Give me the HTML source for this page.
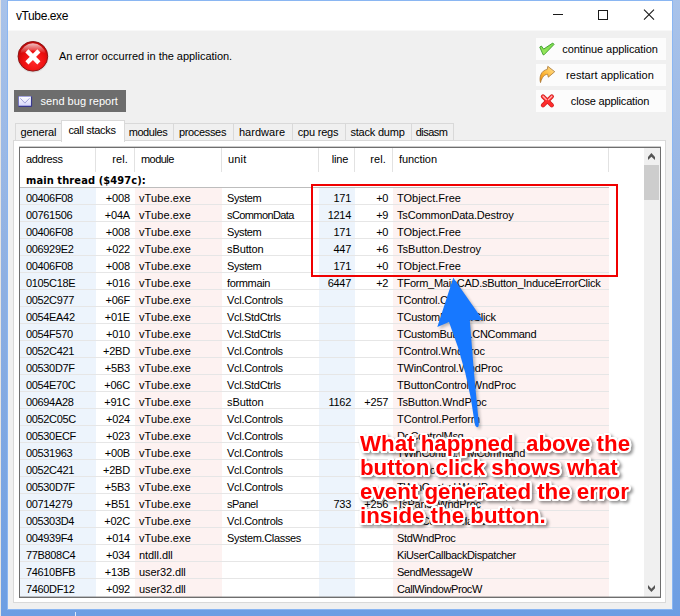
<!DOCTYPE html><html><head><meta charset="utf-8"><title>vTube.exe</title><style>
html,body{margin:0;padding:0}
body{width:680px;height:616px;position:relative;overflow:hidden;background:#6f9fe0;font-family:"Liberation Sans", sans-serif;font-size:11px;color:#000}
.abs{position:absolute}
#frame{left:0;top:0;width:680px;height:616px;background:linear-gradient(180deg,#a9c3ea 0%,#8fb0e2 45%,#6d9ee3 100%)}
#ledge{left:0;top:0;width:1px;height:616px;background:#e6e4e2}
#client{left:8px;top:1px;width:664px;height:608px;background:#f0f0f0;box-shadow:0 0 0 1px #8ab6f2}
#title{left:0;top:0;width:664px;height:29px;background:#fff;border-bottom:1px solid #f8f8f8}
#title .t{left:8px;top:7px;font-size:12px;line-height:16px;letter-spacing:-0.4px}
.btn{left:528px;width:130px;height:22px;background:#fcfcfc}
.btn .l{position:absolute;left:18px;right:0;top:-0.5px;line-height:22px;text-align:center;white-space:nowrap}
#send{left:6px;top:89px;width:112px;height:22px;background:#6d6d6d;color:#fff}
#send .l{position:absolute;left:26.6px;top:0;line-height:22px;white-space:nowrap}
.tab{top:122px;height:18px;border:1px solid #d9d9d9;border-bottom:none;box-sizing:border-box;background:#f0f0f0;text-align:center;line-height:17px;white-space:nowrap}
.tab.sel{top:119px;height:22px;background:#fff;z-index:3;line-height:17px;padding-top:1px}
.tab.sh{padding-right:2px}
#pane{left:5px;top:139px;width:653px;height:463px;background:#fff;border:1px solid #d9d9d9;box-sizing:border-box}
#list{left:11px;top:146px;width:642px;height:451px;background:#fff;border:1px solid #6e6e6e;box-sizing:border-box;overflow:hidden;box-shadow:0 -1px 0 rgba(110,110,110,0.35)}
.hd{top:5.4px;line-height:13px;white-space:nowrap}
.hs{top:0px;width:1px;height:24px;background:#e2e2e2}
.col{top:40px;height:409px}
.row{left:0;width:589px;height:17px;border-top:1px solid #e6e6e6;box-sizing:border-box}
.row span{position:absolute;top:2.6px;line-height:14px;white-space:nowrap}
.r{text-align:right}
</style></head><body>
<div id="frame" class="abs"></div><div id="ledge" class="abs"></div>
<div id="client" class="abs">
<div id="title" class="abs"><div class="t abs">vTube.exe</div>
<svg class="abs" style="left:530px;top:0" width="134" height="29" viewBox="0 0 134 29"><g stroke="#1a1a1a" stroke-width="1" fill="none" shape-rendering="crispEdges"><path d="M15 13.5h10"/><rect x="60.5" y="9.5" width="9" height="9"/></g><path d="M106 8.700l10 10M116 8.700l-10 10" stroke="#1a1a1a" stroke-width="1.1" fill="none"/></svg>
</div>
<svg class="abs" style="left:8px;top:38px" width="34" height="36" viewBox="0 0 34 36"><defs><radialGradient id="rg" cx="0.55" cy="0.68" r="0.62"><stop offset="0" stop-color="#ff2a2a"/><stop offset="0.6" stop-color="#ee1010"/><stop offset="1" stop-color="#c40808"/></radialGradient><linearGradient id="hl" x1="0" y1="0" x2="0" y2="1"><stop offset="0" stop-color="#fff" stop-opacity="0.75"/><stop offset="1" stop-color="#fff" stop-opacity="0"/></linearGradient></defs><circle cx="17" cy="17.9" r="15.6" fill="#b0b0b0" opacity="0.35"/><circle cx="16.9" cy="17.300" r="14.8" fill="url(#rg)" stroke="#8e1515" stroke-width="1"/><path d="M4.2 14.5A13 13 0 0 1 29.6 14.5Q17 8.5 4.2 14.5Z" fill="url(#hl)"/><path d="M10.9 11.9l12 12M22.900 11.9l-12 12" stroke="#fff" stroke-width="4.4" stroke-linecap="butt"/></svg>
<div class="abs" style="left:51px;top:48px;line-height:14px;white-space:nowrap" id="errmsg"><span style="letter-spacing:-0.03px;">An error occurred in the application.</span></div>
<div id="send" class="abs"><svg class="abs" style="left:4px;top:5px" width="15" height="13" viewBox="0 0 15 13"><defs><linearGradient id="env" x1="0" y1="0" x2="0" y2="1"><stop offset="0" stop-color="#ffffff"/><stop offset="1" stop-color="#d6d6fb"/></linearGradient></defs><rect x="0.200" y="1" width="13.400" height="10.400" rx="0.800" fill="#6a6ac8"/><path d="M13.600 1.600V11.400H0.600" fill="none" stroke="#34348c" stroke-width="1"/><rect x="0.900" y="1.600" width="12" height="9" fill="url(#env)"/><path d="M2.300 3.300l4.600 4.800 4.600-4.800" fill="none" stroke="#9a9ad6" stroke-width="0.900"/></svg><span class="l" style="letter-spacing:0.02px;">send bug report</span></div>
<div class="btn abs" style="top:37px"><svg class="abs" style="left:0;top:0" width="22" height="22" viewBox="0 0 22 22"><defs><linearGradient id="gck" x1="0" y1="0" x2="0" y2="1"><stop offset="0" stop-color="#7ddc4c"/><stop offset="1" stop-color="#9be85e"/></linearGradient></defs><path d="M3.75 9.1L5.36 8L7.68 11.07L16.79 5L18.04 6.43L8.04 16.79L7.14 16.79Z" fill="url(#gck)" stroke="#3c9c2c" stroke-width="0.9" stroke-linejoin="round"/></svg><span class="l" style="letter-spacing:-0.09px;">continue application</span></div>
<div class="btn abs" style="top:63px"><svg class="abs" style="left:0;top:0" width="22" height="22" viewBox="0 0 22 22"><defs><linearGradient id="gar" x1="1" y1="0" x2="0" y2="1"><stop offset="0" stop-color="#ffe29a"/><stop offset="0.45" stop-color="#ffc24a"/><stop offset="1" stop-color="#f08c00"/></linearGradient></defs><path d="M11.8 2.3L18.75 7.7L12.3 13.2L11.6 10.2C8.5 10.5 6 13 4.5 18.6C3 13 5 6.5 11.25 5.4Z" fill="url(#gar)" stroke="#a8783a" stroke-width="0.8" stroke-linejoin="round"/></svg><span class="l" style="letter-spacing:0.06px;">restart application</span></div>
<div class="btn abs" style="top:89px"><svg class="abs" style="left:0;top:0" width="22" height="22" viewBox="0 0 22 22"><g fill="none" stroke-linecap="round"><path d="M7 6.500l8.800 8.800M15.800 6.500l-8.800 8.800" stroke="#cc2222" stroke-width="4.300"/><path d="M7 6.500l8.800 8.800M15.800 6.500l-8.800 8.800" stroke="#ff2c2c" stroke-width="2.900"/><path d="M7 6.300l3.300 3.300M15.800 6.300l-3.300 3.300" stroke="#ffb4b4" stroke-width="1.300"/></g></svg><span class="l" style="letter-spacing:-0.18px;">close application</span></div>
<div class="tab abs" style="left:7px;width:47px"><span style="letter-spacing:-0.11px;">general</span></div>
<div class="tab abs sel sh" style="left:53px;width:64px"><span style="letter-spacing:-0.32px;">call stacks</span></div>
<div class="tab abs sh" style="left:116px;width:50px"><span style="letter-spacing:-0.41px;">modules</span></div>
<div class="tab abs sh" style="left:165px;width:61px"><span style="letter-spacing:-0.33px;">processes</span></div>
<div class="tab abs sh" style="left:225px;width:60px"><span style="letter-spacing:0.04px;">hardware</span></div>
<div class="tab abs sh" style="left:284px;width:54px"><span style="letter-spacing:-0.20px;">cpu regs</span></div>
<div class="tab abs sh" style="left:337px;width:67px"><span style="letter-spacing:-0.21px;">stack dump</span></div>
<div class="tab abs sh" style="left:403px;width:43px"><span style="letter-spacing:-0.52px;">disasm</span></div>
<div id="pane" class="abs"></div>
<div id="list" class="abs">
<div class="col abs" style="left:0px;width:76px;background:#edf4fc"></div>
<div class="col abs" style="left:115px;width:87px;background:#fdf2f1"></div>
<div class="col abs" style="left:299px;width:36px;background:#edf4fc"></div>
<div class="col abs" style="left:373px;width:216px;background:#fdf2f1"></div>
<div class="hs abs" style="left:75px"></div>
<div class="hs abs" style="left:114px"></div>
<div class="hs abs" style="left:201px"></div>
<div class="hs abs" style="left:298px"></div>
<div class="hs abs" style="left:334px"></div>
<div class="hs abs" style="left:372px"></div>
<div class="hs abs" style="left:588px"></div>
<div class="hd abs" style="left:6px"><span style="letter-spacing:-0.36px;">address</span></div>
<div class="hd abs r" style="left:76px;width:32px"><span style="letter-spacing:0.09px;">rel.</span></div>
<div class="hd abs" style="left:121px"><span style="letter-spacing:-0.55px;">module</span></div>
<div class="hd abs" style="left:208px"><span style="letter-spacing:0.17px;">unit</span></div>
<div class="hd abs r" style="left:299px;width:29.4px"><span style="letter-spacing:-0.10px;">line</span></div>
<div class="hd abs r" style="left:335px;width:31px"><span style="letter-spacing:0.09px;">rel.</span></div>
<div class="hd abs" style="left:379px"><span style="letter-spacing:-0.07px;">function</span></div>
<div class="abs" style="left:6px;top:26.4px;line-height:13px;letter-spacing:0.1px;font-weight:bold;font-family:'DejaVu Sans Condensed','Liberation Sans',sans-serif;white-space:nowrap" id="mt">main thread ($497c):</div>
<div class="abs" style="left:0;top:39px;width:589px;height:1px;background:#bdbdbd"></div>
<div class="row abs" style="top:39px;border-top-color:transparent">
<span style="letter-spacing:-0.34px;left:6px">00406F08</span>
<span class="r" style="letter-spacing:-0.15px;left:76px;width:34px">+008</span>
<span style="letter-spacing:0.10px;left:119px">vTube.exe</span>
<span style="letter-spacing:-0.40px;left:207px">System</span>
<span class="r" style="letter-spacing:-0.30px;left:299px;width:32px">171</span>
<span class="r" style="letter-spacing:-0.20px;left:335px;width:33.3px">+0</span>
<span style="letter-spacing:0.00px;left:377px">TObject.Free</span>
</div>
<div class="row abs" style="top:56px">
<span style="letter-spacing:-0.34px;left:6px">00761506</span>
<span class="r" style="letter-spacing:-0.20px;left:76px;width:34px">+04A</span>
<span style="letter-spacing:0.10px;left:119px">vTube.exe</span>
<span style="letter-spacing:-0.59px;left:207px">sCommonData</span>
<span class="r" style="letter-spacing:-0.30px;left:299px;width:32px">1214</span>
<span class="r" style="letter-spacing:-0.20px;left:335px;width:33.3px">+9</span>
<span style="letter-spacing:-0.16px;left:377px">TsCommonData.Destroy</span>
</div>
<div class="row abs" style="top:73px">
<span style="letter-spacing:-0.34px;left:6px">00406F08</span>
<span class="r" style="letter-spacing:-0.15px;left:76px;width:34px">+008</span>
<span style="letter-spacing:0.10px;left:119px">vTube.exe</span>
<span style="letter-spacing:-0.40px;left:207px">System</span>
<span class="r" style="letter-spacing:-0.30px;left:299px;width:32px">171</span>
<span class="r" style="letter-spacing:-0.20px;left:335px;width:33.3px">+0</span>
<span style="letter-spacing:0.00px;left:377px">TObject.Free</span>
</div>
<div class="row abs" style="top:90px">
<span style="letter-spacing:-0.34px;left:6px">006929E2</span>
<span class="r" style="letter-spacing:-0.20px;left:76px;width:34px">+022</span>
<span style="letter-spacing:0.10px;left:119px">vTube.exe</span>
<span style="letter-spacing:-0.10px;left:207px">sButton</span>
<span class="r" style="letter-spacing:-0.30px;left:299px;width:32px">447</span>
<span class="r" style="letter-spacing:-0.20px;left:335px;width:33.3px">+6</span>
<span style="letter-spacing:0.02px;left:377px">TsButton.Destroy</span>
</div>
<div class="row abs" style="top:107px">
<span style="letter-spacing:-0.34px;left:6px">00406F08</span>
<span class="r" style="letter-spacing:-0.15px;left:76px;width:34px">+008</span>
<span style="letter-spacing:0.10px;left:119px">vTube.exe</span>
<span style="letter-spacing:-0.40px;left:207px">System</span>
<span class="r" style="letter-spacing:-0.30px;left:299px;width:32px">171</span>
<span class="r" style="letter-spacing:-0.20px;left:335px;width:33.3px">+0</span>
<span style="letter-spacing:0.00px;left:377px">TObject.Free</span>
</div>
<div class="row abs" style="top:124px">
<span style="letter-spacing:-0.34px;left:6px">0105C18E</span>
<span class="r" style="letter-spacing:-0.20px;left:76px;width:34px">+016</span>
<span style="letter-spacing:0.10px;left:119px">vTube.exe</span>
<span style="letter-spacing:-0.35px;left:207px">formmain</span>
<span class="r" style="letter-spacing:-0.30px;left:299px;width:32px">6447</span>
<span class="r" style="letter-spacing:-0.20px;left:335px;width:33.3px">+2</span>
<span style="letter-spacing:-0.26px;left:377px">TForm_MainCAD.sButton_InduceErrorClick</span>
</div>
<div class="row abs" style="top:141px">
<span style="letter-spacing:-0.34px;left:6px">0052C977</span>
<span class="r" style="letter-spacing:-0.20px;left:76px;width:34px">+06F</span>
<span style="letter-spacing:0.10px;left:119px">vTube.exe</span>
<span style="letter-spacing:-0.29px;left:207px">Vcl.Controls</span>
<span style="letter-spacing:-0.25px;left:377px">TControl.Click</span>
</div>
<div class="row abs" style="top:158px">
<span style="letter-spacing:-0.34px;left:6px">0054EA42</span>
<span class="r" style="letter-spacing:-0.20px;left:76px;width:34px">+01E</span>
<span style="letter-spacing:0.10px;left:119px">vTube.exe</span>
<span style="letter-spacing:-0.31px;left:207px">Vcl.StdCtrls</span>
<span style="letter-spacing:-0.24px;left:377px">TCustomButton.Click</span>
</div>
<div class="row abs" style="top:175px">
<span style="letter-spacing:-0.34px;left:6px">0054F570</span>
<span class="r" style="letter-spacing:-0.20px;left:76px;width:34px">+010</span>
<span style="letter-spacing:0.10px;left:119px">vTube.exe</span>
<span style="letter-spacing:-0.31px;left:207px">Vcl.StdCtrls</span>
<span style="letter-spacing:-0.30px;left:377px">TCustomButton.CNCommand</span>
</div>
<div class="row abs" style="top:192px">
<span style="letter-spacing:-0.34px;left:6px">0052C421</span>
<span class="r" style="letter-spacing:-0.20px;left:76px;width:34px">+2BD</span>
<span style="letter-spacing:0.10px;left:119px">vTube.exe</span>
<span style="letter-spacing:-0.29px;left:207px">Vcl.Controls</span>
<span style="letter-spacing:-0.16px;left:377px">TControl.WndProc</span>
</div>
<div class="row abs" style="top:209px">
<span style="letter-spacing:-0.34px;left:6px">00530D7F</span>
<span class="r" style="letter-spacing:-0.20px;left:76px;width:34px">+5B3</span>
<span style="letter-spacing:0.10px;left:119px">vTube.exe</span>
<span style="letter-spacing:-0.29px;left:207px">Vcl.Controls</span>
<span style="letter-spacing:-0.21px;left:377px">TWinControl.WndProc</span>
</div>
<div class="row abs" style="top:226px">
<span style="letter-spacing:-0.34px;left:6px">0054E70C</span>
<span class="r" style="letter-spacing:-0.20px;left:76px;width:34px">+06C</span>
<span style="letter-spacing:0.10px;left:119px">vTube.exe</span>
<span style="letter-spacing:-0.31px;left:207px">Vcl.StdCtrls</span>
<span style="letter-spacing:-0.15px;left:377px">TButtonControl.WndProc</span>
</div>
<div class="row abs" style="top:243px">
<span style="letter-spacing:-0.34px;left:6px">00694A28</span>
<span class="r" style="letter-spacing:-0.20px;left:76px;width:34px">+91C</span>
<span style="letter-spacing:0.10px;left:119px">vTube.exe</span>
<span style="letter-spacing:-0.10px;left:207px">sButton</span>
<span class="r" style="letter-spacing:-0.30px;left:299px;width:32px">1162</span>
<span class="r" style="letter-spacing:-0.20px;left:335px;width:33.3px">+257</span>
<span style="letter-spacing:-0.09px;left:377px">TsButton.WndProc</span>
</div>
<div class="row abs" style="top:260px">
<span style="letter-spacing:-0.34px;left:6px">0052C05C</span>
<span class="r" style="letter-spacing:-0.20px;left:76px;width:34px">+024</span>
<span style="letter-spacing:0.10px;left:119px">vTube.exe</span>
<span style="letter-spacing:-0.29px;left:207px">Vcl.Controls</span>
<span style="letter-spacing:-0.09px;left:377px">TControl.Perform</span>
</div>
<div class="row abs" style="top:277px">
<span style="letter-spacing:-0.34px;left:6px">00530ECF</span>
<span class="r" style="letter-spacing:-0.20px;left:76px;width:34px">+023</span>
<span style="letter-spacing:0.10px;left:119px">vTube.exe</span>
<span style="letter-spacing:-0.29px;left:207px">Vcl.Controls</span>
<span style="letter-spacing:-0.33px;left:377px">DoControlMsg</span>
</div>
<div class="row abs" style="top:294px">
<span style="letter-spacing:-0.34px;left:6px">00531963</span>
<span class="r" style="letter-spacing:-0.20px;left:76px;width:34px">+00B</span>
<span style="letter-spacing:0.10px;left:119px">vTube.exe</span>
<span style="letter-spacing:-0.29px;left:207px">Vcl.Controls</span>
<span style="letter-spacing:-0.31px;left:377px">TWinControl.WMCommand</span>
</div>
<div class="row abs" style="top:311px">
<span style="letter-spacing:-0.34px;left:6px">0052C421</span>
<span class="r" style="letter-spacing:-0.20px;left:76px;width:34px">+2BD</span>
<span style="letter-spacing:0.10px;left:119px">vTube.exe</span>
<span style="letter-spacing:-0.29px;left:207px">Vcl.Controls</span>
<span style="letter-spacing:-0.16px;left:377px">TControl.WndProc</span>
</div>
<div class="row abs" style="top:328px">
<span style="letter-spacing:-0.34px;left:6px">00530D7F</span>
<span class="r" style="letter-spacing:-0.20px;left:76px;width:34px">+5B3</span>
<span style="letter-spacing:0.10px;left:119px">vTube.exe</span>
<span style="letter-spacing:-0.29px;left:207px">Vcl.Controls</span>
<span style="letter-spacing:-0.21px;left:377px">TWinControl.WndProc</span>
</div>
<div class="row abs" style="top:345px">
<span style="letter-spacing:-0.34px;left:6px">00714279</span>
<span class="r" style="letter-spacing:-0.20px;left:76px;width:34px">+B51</span>
<span style="letter-spacing:0.10px;left:119px">vTube.exe</span>
<span style="letter-spacing:-0.50px;left:207px">sPanel</span>
<span class="r" style="letter-spacing:-0.30px;left:299px;width:32px">733</span>
<span class="r" style="letter-spacing:-0.20px;left:335px;width:33.3px">+256</span>
<span style="letter-spacing:-0.24px;left:377px">TsPanel.WndProc</span>
</div>
<div class="row abs" style="top:362px">
<span style="letter-spacing:-0.34px;left:6px">005303D4</span>
<span class="r" style="letter-spacing:-0.20px;left:76px;width:34px">+02C</span>
<span style="letter-spacing:0.10px;left:119px">vTube.exe</span>
<span style="letter-spacing:-0.29px;left:207px">Vcl.Controls</span>
<span style="letter-spacing:-0.25px;left:377px">TWinControl.MainWndProc</span>
</div>
<div class="row abs" style="top:379px">
<span style="letter-spacing:-0.34px;left:6px">004939F4</span>
<span class="r" style="letter-spacing:-0.20px;left:76px;width:34px">+014</span>
<span style="letter-spacing:0.10px;left:119px">vTube.exe</span>
<span style="letter-spacing:-0.35px;left:207px">System.Classes</span>
<span style="letter-spacing:-0.34px;left:377px">StdWndProc</span>
</div>
<div class="row abs" style="top:396px">
<span style="letter-spacing:-0.34px;left:6px">77B808C4</span>
<span class="r" style="letter-spacing:-0.20px;left:76px;width:34px">+034</span>
<span style="letter-spacing:-0.06px;left:119px">ntdll.dll</span>
<span style="letter-spacing:-0.37px;left:377px">KiUserCallbackDispatcher</span>
</div>
<div class="row abs" style="top:413px">
<span style="letter-spacing:-0.34px;left:6px">74610BFB</span>
<span class="r" style="letter-spacing:-0.20px;left:76px;width:34px">+13B</span>
<span style="letter-spacing:-0.11px;left:119px">user32.dll</span>
<span style="letter-spacing:-0.47px;left:377px">SendMessageW</span>
</div>
<div class="row abs" style="top:430px">
<span style="letter-spacing:-0.34px;left:6px">7460DF12</span>
<span class="r" style="letter-spacing:-0.20px;left:76px;width:34px">+092</span>
<span style="letter-spacing:-0.11px;left:119px">user32.dll</span>
<span style="letter-spacing:-0.41px;left:377px">CallWindowProcW</span>
</div>
<div class="abs" style="left:624px;top:0;width:16px;height:449px;background:#f0f0f0"></div>
<div class="abs" style="left:624px;top:17px;width:15px;height:35px;background:#cdcdcd"></div>
<svg class="abs" style="left:624px;top:0" width="16" height="17" viewBox="0 0 16 17"><path d="M4 8.9L7.4 5.1L11 8.9V12L7.4 8.700L4 12Z" fill="#555"/></svg>
<svg class="abs" style="left:624px;top:432px" width="16" height="17" viewBox="0 0 16 17"><path d="M4 5.100L7.400 8.700L11 5.100V8.200L7.400 12L4 8.200Z" fill="#555"/></svg>
<div class="abs" style="left:0;top:448px;width:640px;height:1px;background:rgba(110,110,110,0.4)"></div>
</div>
</div>
<div class="abs" style="left:311px;top:184px;width:307px;height:93px;border:2px solid #f00000;box-sizing:border-box;z-index:5"></div>
<svg class="abs" style="left:0;top:0;z-index:6" width="680" height="616" viewBox="0 0 680 616"><defs><filter id="sh" x="-20%" y="-20%" width="140%" height="140%"><feGaussianBlur stdDeviation="1.5"/></filter></defs>
<path d="M453.3 277.8L482.8 320L469.8 320.3Q473.5 372 478.8 423Q479 427.5 477 427.3Q475.3 427 474.8 424Q468.5 372 449 322L437.3 327.1Z" fill="#000" opacity="0.25" filter="url(#sh)" transform="translate(2,2)"/>
<path d="M453.3 277.8L482.8 320L469.8 320.3Q473.5 372 478.8 423Q479 427.5 477 427.3Q475.3 427 474.8 424Q468.5 372 449 322L437.3 327.1Z" fill="#1778ff"/>
</svg>
<div class="abs" id="note" style="left:360px;top:430.5px;z-index:7;font-weight:bold;font-size:22.3px;color:#ff0000;white-space:nowrap;text-shadow:2.20px 0.00px 0.6px #fff,2.03px 0.84px 0.6px #fff,1.56px 1.56px 0.6px #fff,0.84px 2.03px 0.6px #fff,0.00px 2.20px 0.6px #fff,-0.84px 2.03px 0.6px #fff,-1.56px 1.56px 0.6px #fff,-2.03px 0.84px 0.6px #fff,-2.20px 0.00px 0.6px #fff,-2.03px -0.84px 0.6px #fff,-1.56px -1.56px 0.6px #fff,-0.84px -2.03px 0.6px #fff,-0.00px -2.20px 0.6px #fff,0.84px -2.03px 0.6px #fff,1.56px -1.56px 0.6px #fff,2.03px -0.84px 0.6px #fff,1.20px 0.00px 0 #fff,0.85px 0.85px 0 #fff,0.00px 1.20px 0 #fff,-0.85px 0.85px 0 #fff,-1.20px 0.00px 0 #fff,-0.85px -0.85px 0 #fff,-0.00px -1.20px 0 #fff,0.85px -0.85px 0 #fff;filter:drop-shadow(2px 2.5px 1.8px rgba(0,0,0,0.42))">
<div style="position:absolute;left:0;top:0.0px;line-height:26px">What happned&nbsp; above the</div>
<div style="position:absolute;left:0;top:24.3px;line-height:26px">button click shows what</div>
<div style="position:absolute;left:0;top:48.6px;line-height:26px">event generated the error</div>
<div style="position:absolute;left:0;top:72.9px;line-height:26px">inside the button.</div>
</div>
<div class="abs" style="left:75px;top:612px;width:1px;height:4px;background:#dfe9f8"></div>
</body></html>
